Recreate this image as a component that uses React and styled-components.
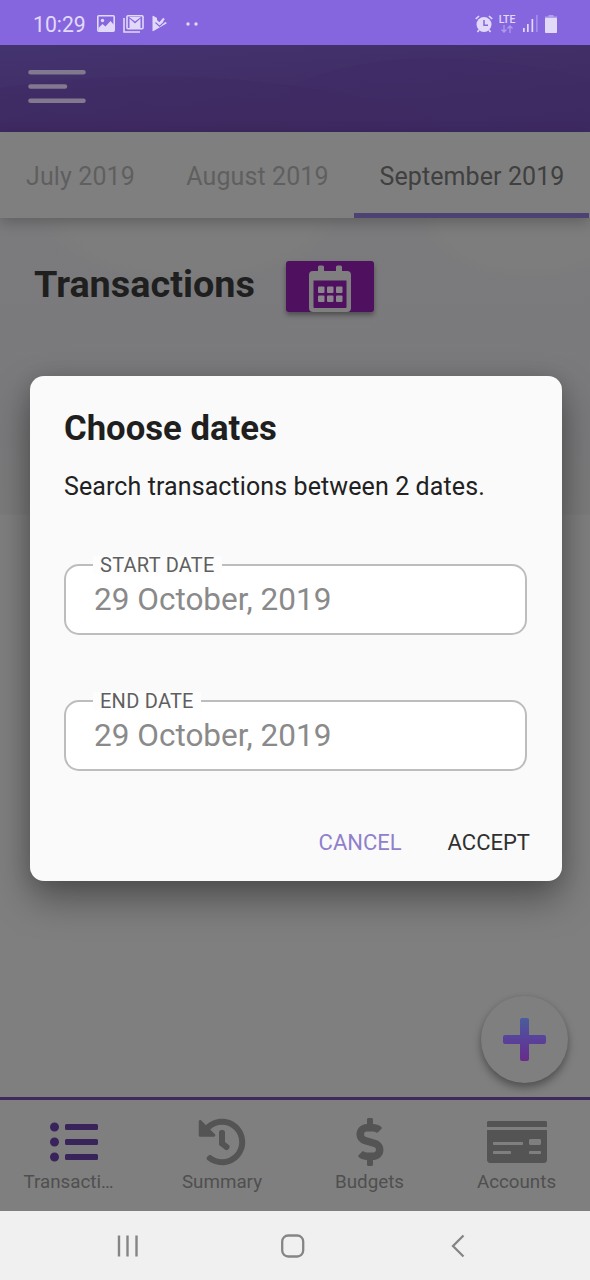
import React, { useState } from 'react'
import { styled, createGlobalStyle } from 'styled-components';
import { FaListUl, FaHistory, FaDollarSign, FaMoneyCheck } from 'react-icons/fa';

const GlobalStyle = createGlobalStyle`
  * {
    box-sizing: border-box;
  }

  body {
    margin: 0;
    font-family: Roboto, sans-serif;
  }

  button {
    font-family: inherit;
    border: none;
    background: none;
    padding: 0;
  }
`;

const Phone = styled.div`
  position: relative;
  width: 590px;
  height: 1280px;
  display: flex;
  flex-direction: column;
  overflow: hidden;
  background-color: #7f7f7f;
`;

const StatusBar = styled.div`
  height: 45px;
  flex: none;
  display: flex;
  align-items: center;
  justify-content: space-between;
  padding: 2px 33px 0 33px;
  background-color: #8566df;
  color: #e2d9f8;
`;

const StatusGroup = styled.div`
  display: flex;
  align-items: center;
`;

const Clock = styled.span`
  font-size: 21.2px;
  line-height: 24px;
  width: 64px;
  padding-top: 2px;
`;

const Notifications = styled.div`
  display: flex;
  align-items: center;
  gap: 8px;
`;

const Network = styled.div`
  display: flex;
  flex-direction: column;
  align-items: center;
  width: 18px;
  margin: 0 7px 0 5px;
  font-size: 10.5px;
  font-weight: 500;
  line-height: 10px;
`;

const Header = styled.header`
  height: 87px;
  flex: none;
  background: linear-gradient(175deg, #43336f 0%, #412e67 45%, #3d295d 100%);
`;

const HeaderArt = styled.svg`
  display: block;
`;

const Tabs = styled.nav`
  position: relative;
  z-index: 1;
  height: 86px;
  flex: none;
  display: flex;
  background-color: #7f7f7f;
  box-shadow: 0 4px 14px rgba(0, 0, 0, 0.24);
`;

const Tab = styled.button`
  flex: none;
  width: ${(props) => props.$width}px;
  padding: 8px 0 0 1px;
  font-size: 25px;
  letter-spacing: 0.1px;
  white-space: nowrap;
  color: ${(props) => (props.$active ? '#404040' : '#5f5f5f')};
  border-bottom: 5px solid ${(props) => (props.$active ? '#4d4372' : 'transparent')};
`;

const Content = styled.main`
  flex: 1;
  display: flex;
  flex-direction: column;
  justify-content: space-between;
  background:
    radial-gradient(ellipse 150px 66px at 190px 0, #7d7d7d 80%, transparent),
    radial-gradient(ellipse 110px 62px at 530px 0, #7d7d7d 80%, transparent),
    linear-gradient(#7b7b7d 0, #7a7a7c 200px, #7b7b7c 296px, #7f7f7f 297px);
`;

const TitleRow = styled.div`
  display: flex;
  align-items: center;
  padding: 43px 0 0 34px;
`;

const Title = styled.h1`
  margin: 0;
  width: 252px;
  padding-bottom: 6px;
  font-size: 37.8px;
  line-height: 44px;
  font-weight: 700;
  color: #1f1f20;
`;

const CalendarButton = styled.button`
  width: 88px;
  height: 51px;
  display: flex;
  justify-content: center;
  border-radius: 3px;
  background-color: #4f1060;
  box-shadow: 0 3px 5px rgba(0, 0, 0, 0.36);
`;

const AddButton = styled.button`
  align-self: flex-end;
  margin: 0 22px 14px 0;
  width: 87px;
  height: 87px;
  display: flex;
  align-items: center;
  justify-content: center;
  border-radius: 50%;
  background-color: #7f7f7f;
  box-shadow: 0 5px 9px rgba(0, 0, 0, 0.34), 0 0 5px rgba(0, 0, 0, 0.08);
`;

const BottomNav = styled.nav`
  height: 114px;
  flex: none;
  display: grid;
  grid-template-columns: 148px 148px 147px 147px;
  border-top: 3px solid #3c2b5c;
  background-color: #7f7f7f;
`;

const NavItem = styled.button`
  display: flex;
  flex-direction: column;
  align-items: center;
  padding-top: 18px;
  color: ${(props) => (props.$active ? '#38245a' : '#545454')};
`;

const NavLabel = styled.span`
  width: 101px;
  margin-top: 4px;
  text-align: ${(props) => (props.$truncated ? 'left' : 'center')};
  white-space: nowrap;
  font-size: 18.8px;
  line-height: 24px;
  color: #4f4f4f;
`;

const CardIcon = styled(FaMoneyCheck)`
  width: 60px;
  height: 48px;
`;

const SystemBar = styled.div`
  height: 69px;
  flex: none;
  display: flex;
  align-items: center;
  gap: 141px;
  padding: 1px 0 0 116px;
  background-color: #f0f0f0;
`;

const Overlay = styled.div`
  position: absolute;
  inset: 0;
  z-index: 2;
  display: flex;
  align-items: flex-start;
  padding: 376px 28px 0 30px;
`;

const Dialog = styled.section`
  width: 532px;
  height: 505px;
  padding: 30px 35px 0 34px;
  border-radius: 14px;
  background-color: #fafafa;
  box-shadow: 0 18px 38px rgba(0, 0, 0, 0.36), 0 2px 20px rgba(0, 0, 0, 0.12);
`;

const DialogTitle = styled.h2`
  margin: 0;
  font-size: 34.7px;
  line-height: 44px;
  font-weight: 700;
  color: #1f1f1f;
`;

const DialogText = styled.p`
  margin: 22px 0 54px;
  font-size: 25px;
  line-height: 30px;
  letter-spacing: 0.1px;
  white-space: nowrap;
  color: #212121;
`;

const Field = styled.fieldset`
  height: 79px;
  margin: 0 0 57px;
  padding: 0 0 0 27px;
  border: 2px solid #bdbdbd;
  border-radius: 15px;
  background-color: #fff;
`;

const Legend = styled.legend`
  padding: 0 7px;
  font-size: 20px;
  line-height: 18px;
  letter-spacing: 0.25px;
  color: #5f5f5f;
  background-color: #fdfdfd;
`;

const DateInput = styled.input`
  display: block;
  width: 400px;
  height: 50px;
  padding: 0 0 0 1px;
  border: none;
  outline: none;
  background: none;
  font-family: inherit;
  font-size: 31.5px;
  color: #8a8a8a;
`;

const Actions = styled.div`
  display: flex;
  justify-content: flex-end;
  gap: 46px;
  margin-right: -3px;
`;

const Action = styled.button`
  font-size: 22px;
  line-height: 30px;
  color: ${(props) => (props.$primary ? '#303030' : '#9080cc')};
`;

const ImageIcon = () => (
  <svg width="18" height="17" viewBox="0 0 18 17">
    <rect x="0.800" y="0.800" width="16.400" height="15.400" rx="1" fill="none" stroke="currentColor" strokeWidth="1.600" />
    <circle cx="5.500" cy="5.500" r="1.700" fill="currentColor" />
    <path d="M1.500 13l4-4 3 2.500 5-5.500 3.500 4v6H1.500z" fill="currentColor" />
  </svg>
);

const GmailIcon = () => (
  <svg width="21" height="18" viewBox="0 0 21 18">
    <path d="M1 3v14h16" fill="none" stroke="currentColor" strokeWidth="1.600" />
    <rect x="4" y="0.800" width="16" height="13" rx="1" fill="none" stroke="currentColor" strokeWidth="1.600" />
    <path d="M6.500 13V3.500l5.500 5 5.500-5V13z" fill="currentColor" />
    <path d="M6 2h12l-6 4.500z" fill="currentColor" />
  </svg>
);

const PlayCheckIcon = () => (
  <svg width="16" height="17" viewBox="0 0 16 17">
    <path d="M0.500 1.500q0-1 1-0.500L5 3v3l2.500 2L10 5.500l1 1 3.500 1L14.500 8.500 1.500 16q-1 0.500-1-0.500z" fill="currentColor" />
    <path d="M3.500 7.500l4 3.800L14.500 5" fill="none" stroke="#8566df" strokeWidth="1.200" />
    <path d="M4 5.500l3.500 3.200 4.500-5.200" fill="none" stroke="currentColor" strokeWidth="2" />
  </svg>
);

const DotsIcon = () => (
  <svg width="26" height="4" viewBox="0 0 26 4" fill="currentColor">
    <circle cx="12" cy="2" r="1.700" />
    <circle cx="20" cy="2" r="1.700" />
  </svg>
);

const AlarmIcon = () => (
  <svg width="18" height="18" viewBox="0 0 18 18">
    <circle cx="9" cy="9.500" r="7.500" fill="currentColor" />
    <path d="M0.800 4L4 1M17.200 4L14 1M4 15l-1.500 2M14 15l1.500 2" stroke="currentColor" strokeWidth="1.700" />
    <path d="M9 5v5.200h4" fill="none" stroke="#8566df" strokeWidth="1.500" />
  </svg>
);

const SignalIcon = () => (
  <svg width="16" height="17" viewBox="0 0 16 17" fill="currentColor">
    <rect x="0" y="13" width="1.700" height="4" />
    <rect x="4" y="9" width="1.700" height="8" />
    <rect x="8.500" y="4" width="1.700" height="13" />
    <rect x="13" y="0" width="1.700" height="17" opacity="0.35" />
  </svg>
);

const BatteryIcon = () => (
  <svg width="18" height="18" viewBox="-6 0 18 18" fill="currentColor">
    <path d="M3.500 0h5v1.500H12V4H0V1.500h3.500z" opacity="0.5" />
    <rect x="0" y="3" width="12" height="15" rx="0.800" />
  </svg>
);

const CalendarIcon = () => (
  <svg width="42" height="51" viewBox="0 0 42 51">
    <path d="M9 12V6q0-1.500 1.500-1.500h3Q15 4.500 15 6v6zM27 12V6q0-1.500 1.500-1.500h3Q33 4.500 33 6v6z" fill="#7f7f7f" />
    <path fillRule="evenodd" d="M4 10h34q4 0 4 4v33q0 4-4 4H4q-4 0-4-4V14q0-4 4-4zM4.500 19.500V46q0 1 1 1h31q1 0 1-1V19.500z" fill="#7f7f7f" />
    {[25.5, 34.5].map((y) => [9, 18, 27].map((x) => (
      <rect key={x + y} x={x} y={y} width="6.500" height="6.500" rx="1" fill="#8b868c" />
    )))}
  </svg>
);

const PlusIcon = () => (
  <svg width="43" height="43" viewBox="0 0 43 43">
    <defs>
      <linearGradient id="plus" x1="0" y1="0" x2="0" y2="1">
        <stop offset="0" stopColor="#4a5d9c" />
        <stop offset="0.5" stopColor="#59419a" />
        <stop offset="1" stopColor="#682c8a" />
      </linearGradient>
    </defs>
    <path d="M19 0h5q2 0 2 2v15h15q2 0 2 2v5q0 2-2 2H26v15q0 2-2 2h-5q-2 0-2-2V26H2q-2 0-2-2v-5q0-2 2-2h15V2q0-2 2-2z" fill="url(#plus)" />
  </svg>
);

const months = [
  { label: 'July 2019', width: 160 },
  { label: 'August 2019', width: 194 },
  { label: 'September 2019', width: 235 },
];

const navItems = [
  { label: 'Transacti…', icon: <FaListUl size={48} />, truncated: true },
  { label: 'Summary', icon: <FaHistory size={48} /> },
  { label: 'Budgets', icon: <FaDollarSign size={48} /> },
  { label: 'Accounts', icon: <CardIcon /> },
];

const App = () => {
  const [month, setMonth] = useState('September 2019');
  const [page, setPage] = useState('Transacti…');
  const [startDate, setStartDate] = useState('29 October, 2019');
  const [endDate, setEndDate] = useState('29 October, 2019');

  return (
    <Phone>
      <GlobalStyle />
      <StatusBar>
        <StatusGroup>
          <Clock>10:29</Clock>
          <Notifications>
            <ImageIcon />
            <GmailIcon />
            <PlayCheckIcon />
            <DotsIcon />
          </Notifications>
        </StatusGroup>
        <StatusGroup>
          <AlarmIcon />
          <Network>
            LTE
            <svg width="12" height="8" viewBox="0 0 12 8" fill="none" stroke="currentColor" strokeWidth="1.300" opacity="0.45">
              <path d="M3 0v7M0.500 4.500L3 7l2.500-2.500M9 8V1M6.500 3.500L9 1l2.500 2.500" />
            </svg>
          </Network>
          <SignalIcon />
          <BatteryIcon />
        </StatusGroup>
      </StatusBar>

      <Header>
        <HeaderArt width="590" height="87" viewBox="0 0 590 87">
          <path d="M290 42Q360 10 450 14t140 22V87H290z" fill="#3f2c66" opacity="0.6" />
          <path d="M0 43Q150 20 300 42t140 45H0z" fill="#3e285f" opacity="0.3" />
          <path d="M30.500 27.300h53M30.500 41.500h34.500M30.500 55.700h53" stroke="#82788f" strokeWidth="4.600" strokeLinecap="round" />
        </HeaderArt>
      </Header>

      <Tabs>
        {months.map(({ label, width }) => (
          <Tab key={label} $width={width} $active={month === label} onClick={() => setMonth(label)}>
            {label}
          </Tab>
        ))}
      </Tabs>

      <Content>
        <TitleRow>
          <Title>Transactions</Title>
          <CalendarButton>
            <CalendarIcon />
          </CalendarButton>
        </TitleRow>
        <AddButton>
          <PlusIcon />
        </AddButton>
      </Content>

      <BottomNav>
        {navItems.map(({ label, icon, truncated }) => (
          <NavItem key={label} $active={page === label} onClick={() => setPage(label)}>
            {icon}
            <NavLabel $truncated={truncated}>{label}</NavLabel>
          </NavItem>
        ))}
      </BottomNav>

      <SystemBar>
        <svg width="24" height="24" viewBox="0 0 24 24" stroke="#858585" strokeWidth="2.400">
          <path d="M3 1.500v21M11.500 1.500v21M20.500 1.500v21" />
        </svg>
        <svg width="24" height="24" viewBox="0 0 24 24" fill="none" stroke="#858585" strokeWidth="2.300">
          <rect x="1.200" y="1.500" width="21" height="21" rx="6" />
        </svg>
        <svg width="24" height="24" viewBox="-5 0 24 24" fill="none" stroke="#858585" strokeWidth="2.300">
          <path d="M12.500 1.500L2 12l10.500 10.500" />
        </svg>
      </SystemBar>

      <Overlay>
        <Dialog>
          <DialogTitle>Choose dates</DialogTitle>
          <DialogText>Search transactions between 2 dates.</DialogText>
          <Field>
            <Legend>START DATE</Legend>
            <DateInput value={startDate} onChange={(e) => setStartDate(e.target.value)} />
          </Field>
          <Field>
            <Legend>END DATE</Legend>
            <DateInput value={endDate} onChange={(e) => setEndDate(e.target.value)} />
          </Field>
          <Actions>
            <Action>CANCEL</Action>
            <Action $primary>ACCEPT</Action>
          </Actions>
        </Dialog>
      </Overlay>
    </Phone>
  )
}

export default App;
